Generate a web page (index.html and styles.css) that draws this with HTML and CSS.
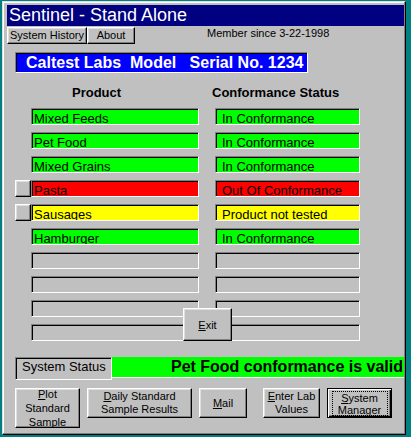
FILE: index.html
```html
<!DOCTYPE html>
<html>
<head>
<meta charset="utf-8">
<link rel="stylesheet" href="styles.css">
</head>
<body>
<div class="window">
  <div class="titlebar">Sentinel - Stand Alone</div>
  <div class="menurow">
    <div class="btn menu-btn w-hist">System History</div>
    <div class="btn menu-btn w-about">About</div>
    <span class="member">Member since 3-22-1998</span>
  </div>
  <div class="banner">Caltest Labs  Model   Serial No. 1234</div>
  <div class="headers"><span class="h-prod">Product</span><span class="h-status">Conformance Status</span></div>
  <div class="rows">
    <div class="row"><span class="slot"></span><div class="field prod green">Mixed Feeds</div><div class="field status green">In Conformance</div></div>
    <div class="row"><span class="slot"></span><div class="field prod green">Pet Food</div><div class="field status green">In Conformance</div></div>
    <div class="row"><span class="slot"></span><div class="field prod green">Mixed Grains</div><div class="field status green">In Conformance</div></div>
    <div class="row"><span class="slot btn"></span><div class="field prod red">Pasta</div><div class="field status red">Out Of Conformance</div></div>
    <div class="row"><span class="slot btn"></span><div class="field prod yellow">Sausages</div><div class="field status yellow">Product not tested</div></div>
    <div class="row"><span class="slot"></span><div class="field prod green">Hamburger</div><div class="field status green">In Conformance</div></div>
    <div class="row"><span class="slot"></span><div class="field prod"></div><div class="field status"></div></div>
    <div class="row"><span class="slot"></span><div class="field prod"></div><div class="field status"></div></div>
    <div class="row"><span class="slot"></span><div class="field prod"></div><div class="field status"></div></div>
    <div class="row"><span class="slot"></span><div class="field prod"></div><div class="field status"></div></div>
    <div class="btn exit"><span><u>E</u>xit</span></div>
  </div>
  <div class="statusrow">
    <div class="status-label">System Status</div>
    <div class="status-msg">Pet Food conformance is valid</div>
  </div>
  <div class="buttons">
    <div class="btn big b-plot"><span><u>P</u>lot<br>Standard<br>Sample</span></div>
    <div class="btn big b-daily"><span><u>D</u>aily Standard<br>Sample Results</span></div>
    <div class="btn big b-mail"><span><u>M</u>ail</span></div>
    <div class="btn big b-enter"><span><u>E</u>nter Lab<br>Values</span></div>
    <div class="btn big b-sys default"><span class="focus"><u>S</u>ystem<br>Manager</span></div>
  </div>
</div>
</body>
</html>
```

FILE: styles.css
```css
html, body {
  margin: 0;
  padding: 0;
}
body {
  background: #008080;
  font-family: "Liberation Sans", Arial, sans-serif;
  width: 411px;
  height: 437px;
  overflow: hidden;
}
.window {
  box-sizing: border-box;
  margin: 1px 0 0 2px;
  width: 404px;
  height: 434px;
  background: #c0c0c0;
  border-top: 1px solid #dfdfdf;
  border-left: 1px solid #dfdfdf;
  border-right: 1px solid #000;
  border-bottom: 1px solid #000;
  box-shadow: inset -1px -1px #808080, inset 1px 1px #fff;
  padding: 3px 1px 0 4px;
}
.titlebar {
  height: 21px;
  line-height: 21px;
  background: #000080;
  color: #fff;
  font-size: 18px;
  padding-left: 2px;
  white-space: nowrap;
}
.btn {
  box-sizing: border-box;
  background: #c0c0c0;
  border: 1px solid;
  border-color: #fff #000 #000 #fff;
  box-shadow: inset -1px -1px #808080, inset 1px 1px #dfdfdf;
  color: #000;
}
.menurow {
  display: flex;
  margin-top: 1px;
  height: 17px;
}
.menu-btn {
  height: 17px;
  font-size: 11px;
  line-height: 15px;
  text-align: center;
  white-space: nowrap;
}
.w-hist { width: 80px; }
.w-about { width: 48px; }
.member {
  margin-left: 72px;
  font-size: 11px;
  line-height: 13px;
  white-space: nowrap;
}
.banner {
  box-sizing: border-box;
  margin: 8px 0 0 8px;
  width: 293px;
  height: 21px;
  background: #0000ff;
  color: #fff;
  font-weight: bold;
  font-size: 16px;
  line-height: 19px;
  white-space: pre;
  padding-left: 10px;
  border-top: 1px solid #808080;
  border-left: 1px solid #808080;
  border-right: 1px solid #fff;
  border-bottom: 1px solid #fff;
  box-shadow: inset 1px 1px #000;
}
.headers {
  margin-top: 12px;
  height: 15px;
  line-height: 15px;
  font-size: 13px;
  font-weight: bold;
  padding-left: 65px;
  white-space: nowrap;
}
.h-prod {
  display: inline-block;
  width: 140px;
}
.rows {
  position: relative;
  margin: 8px 0 0 8px;
  display: flex;
  flex-direction: column;
  gap: 7px;
}
.row {
  display: flex;
  height: 17px;
}
.slot {
  display: block;
  width: 16px;
  height: 17px;
}
.field {
  box-sizing: border-box;
  height: 17px;
  overflow: hidden;
  font-size: 13px;
  line-height: 13px;
  padding-top: 3px;
  white-space: nowrap;
  background: #c0c0c0;
  border-top: 1px solid #808080;
  border-left: 1px solid #808080;
  border-right: 1px solid #fff;
  border-bottom: 1px solid #fff;
  box-shadow: inset 1px 1px #000;
}
.prod {
  width: 168px;
  padding-left: 2px;
}
.status {
  width: 145px;
  margin-left: 16px;
  padding-left: 6px;
}
.green { background: #00ff00; }
.red { background: #ff0000; }
.yellow { background: #ffff00; }
.exit {
  position: absolute;
  left: 168px;
  top: 200px;
  width: 49px;
  height: 33px;
  display: flex;
  align-items: center;
  justify-content: center;
  font-size: 11px;
}
.statusrow {
  display: flex;
  margin: 16px 0 0 8px;
}
.status-label {
  box-sizing: border-box;
  width: 97px;
  height: 23px;
  font-size: 13px;
  line-height: 17px;
  padding-left: 6px;
  white-space: nowrap;
  border-top: 1px solid #808080;
  border-left: 1px solid #808080;
  border-right: 1px solid #fff;
  border-bottom: 1px solid #fff;
  box-shadow: inset 1px 1px #000;
}
.status-msg {
  box-sizing: border-box;
  flex: 1;
  height: 21px;
  background: #00ff00;
  border-bottom: 1px solid #fff;
  font-size: 16px;
  font-weight: bold;
  line-height: 19px;
  text-align: right;
  white-space: nowrap;
  overflow: hidden;
  padding-right: 1px;
}
.buttons {
  display: flex;
  align-items: flex-start;
  margin: 8px 0 0 8px;
}
.big {
  height: 30px;
  display: flex;
  align-items: center;
  justify-content: center;
  text-align: center;
  font-size: 11px;
  line-height: 13px;
  overflow: hidden;
  white-space: nowrap;
}
.b-plot { width: 65px; height: 40px; line-height: 14px; }
.b-daily { width: 105px; margin-left: 7px; }
.b-mail { width: 48px; margin-left: 7px; }
.b-enter { width: 57px; margin-left: 16px; }
.b-sys { width: 65px; margin-left: 7px; }
.default {
  align-items: flex-start;
  border-color: #000;
  box-shadow: inset 1px 1px #fff, inset -1px -1px #000, inset -2px -2px #808080;
}
.focus {
  box-sizing: border-box;
  display: block;
  width: 56px;
  height: 25px;
  margin-top: 2px;
  border: 1px dotted #000;
  line-height: 12px;
  overflow: hidden;
}
```
